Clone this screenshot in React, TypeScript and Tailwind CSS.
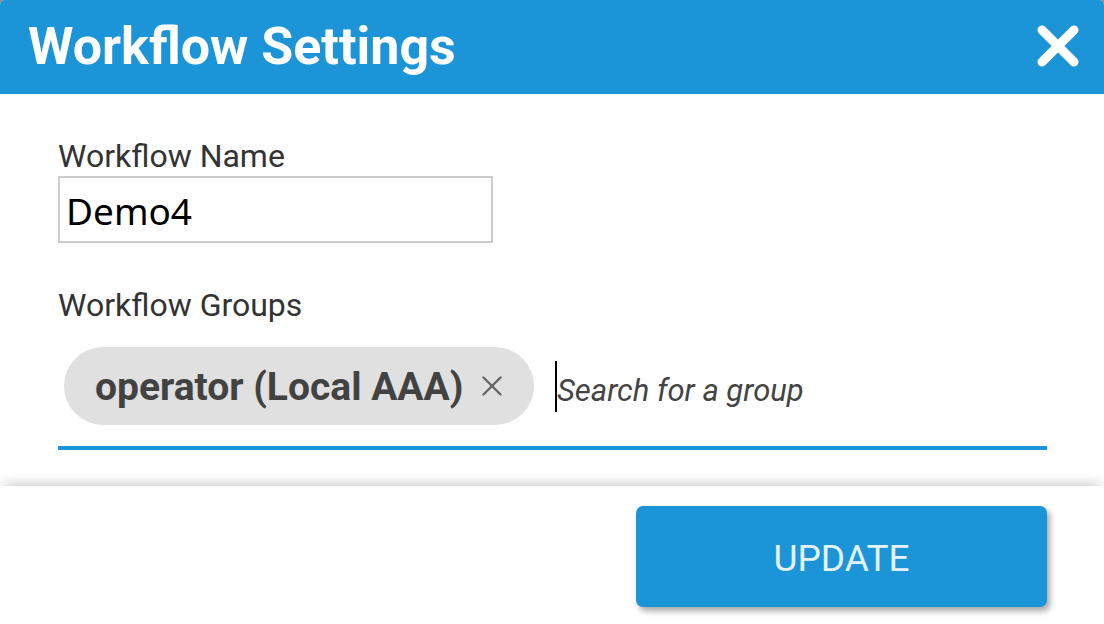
import { X } from "lucide-react";

export default function App() {
  return (
    <div className="h-[624px] w-[1104px] overflow-hidden bg-[#8a8a8a] font-['Roboto',sans-serif]">
      <div className="flex h-full flex-col overflow-hidden rounded-t-[5px] bg-white">
        {/* header */}
        <div className="flex h-[94px] shrink-0 items-center justify-between bg-[#1b95d7] pl-[28px] pr-[22px]">
          <h1 className="text-[52px] font-bold leading-none text-white">Workflow Settings</h1>
          <svg width="48" height="48" viewBox="0 0 48 48" className="mt-[-2px]">
            <path d="M8 8 L40 40 M40 8 L8 40" stroke="white" strokeWidth="9" strokeLinecap="round" />
          </svg>
        </div>

        {/* body */}
        <div className="flex h-[392px] shrink-0 flex-col pl-[58px] pr-[57px] pt-[43px]">
          <label className="block text-[32px] leading-[38px] text-[#333]">Workflow Name</label>
          <div className="mt-[1px] flex h-[67px] w-[435px] items-center border-2 border-[#cccccc] px-[6px]">
            <span className="mt-[2px] font-['Noto_Sans',sans-serif] text-[37px] text-black">Demo4</span>
          </div>

          <label className="mt-[43px] block text-[32px] leading-[38px] text-[#333]">Workflow Groups</label>
          <div className="mt-[23px] flex items-center border-b-4 border-[#1b95d7] pb-[21px] pl-[6px]">
            <div className="flex h-[78px] w-[470px] items-center rounded-full bg-[#e0e0e0] pl-[31px]">
              <span className="mt-[3px] text-[39px] font-bold leading-none text-[#424242]">operator (Local AAA)</span>
              <X className="ml-[12px] h-[34px] w-[34px] text-[#666]" strokeWidth={1.7} />
            </div>
            <div className="ml-[21px] flex items-center">
              <span className="h-[51px] w-[2px] bg-black" />
              <span className="mt-[10px] text-[31px] italic text-[#444]">Search for a group</span>
            </div>
          </div>
        </div>

        {/* footer */}
        <div className="flex flex-1 justify-end bg-white pr-[57px] pt-[20px] shadow-[0_-6px_12px_-4px_rgba(0,0,0,0.22)]">
          <button className="h-[101px] w-[411px] rounded-[7px] bg-[#1b95d7] pt-[4px] text-[37px] text-[#e4f2fa] shadow-[3px_4px_6px_rgba(0,0,0,0.35)]">
            UPDATE
          </button>
        </div>
      </div>
    </div>
  );
}
